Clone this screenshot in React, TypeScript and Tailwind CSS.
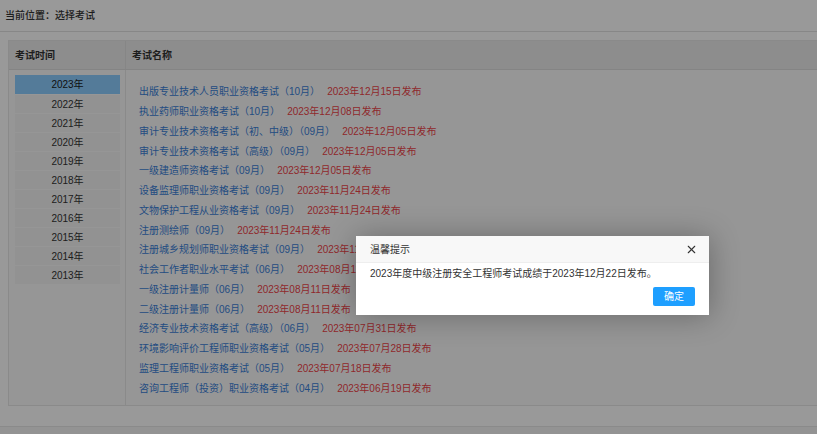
import { X } from 'lucide-react';

const years = ['2023年', '2022年', '2021年', '2020年', '2019年', '2018年', '2017年', '2016年', '2015年', '2014年', '2013年'];

const exams = [
  ['出版专业技术人员职业资格考试（10月）', '2023年12月15日发布'],
  ['执业药师职业资格考试（10月）', '2023年12月08日发布'],
  ['审计专业技术资格考试（初、中级）（09月）', '2023年12月05日发布'],
  ['审计专业技术资格考试（高级）（09月）', '2023年12月05日发布'],
  ['一级建造师资格考试（09月）', '2023年12月05日发布'],
  ['设备监理师职业资格考试（09月）', '2023年11月24日发布'],
  ['文物保护工程从业资格考试（09月）', '2023年11月24日发布'],
  ['注册测绘师（09月）', '2023年11月24日发布'],
  ['注册城乡规划师职业资格考试（09月）', '2023年11月24日发布'],
  ['社会工作者职业水平考试（06月）', '2023年08月11日发布'],
  ['一级注册计量师（06月）', '2023年08月11日发布'],
  ['二级注册计量师（06月）', '2023年08月11日发布'],
  ['经济专业技术资格考试（高级）（06月）', '2023年07月31日发布'],
  ['环境影响评价工程师职业资格考试（05月）', '2023年07月28日发布'],
  ['监理工程师职业资格考试（05月）', '2023年07月18日发布'],
  ['咨询工程师（投资）职业资格考试（04月）', '2023年06月19日发布'],
];

export default function App() {
  return (
    <div className="relative h-[434px] w-[817px] overflow-hidden bg-white font-['Liberation_Sans','Noto_Sans_CJK_SC',sans-serif] text-[10px] text-[#333]">
      {/* breadcrumb */}
      <div className="flex h-[32px] items-center border-b border-[#e2e2e2] px-[5px] font-medium">
        当前位置：选择考试
      </div>

      {/* main panel */}
      <div className="ml-[8px] mt-[8px] w-[840px] border border-[#e6e6e6] bg-[#fbfbfb]">
        <div className="flex h-[29px] border-b border-[#dcdcdc] bg-[#ececec] font-bold">
          <div className="flex w-[117px] items-center border-r border-[#e0e0e0] pl-[6px]">考试时间</div>
          <div className="flex items-center pl-[6px]">考试名称</div>
        </div>
        <div className="flex h-[335px]">
          <div className="w-[117px] border-r border-[#e6e6e6] px-[6px] pt-[5px]">
            <ul className="w-[105px] bg-[#f3f3f3]">
              {years.map((y, i) => (
                <li
                  key={y}
                  className={
                    i === 0
                      ? 'flex h-[19px] items-center justify-center bg-[#8ccdff] text-[#1a1a1a]'
                      : 'flex h-[19px] items-center justify-center border-t border-[#fafafa]'
                  }
                >
                  {y}
                </li>
              ))}
            </ul>
          </div>
          <ul className="pl-[13px] pt-[12px]">
            {exams.map(([name, date]) => (
              <li key={name} className="flex h-[19.75px] items-center whitespace-nowrap">
                <span className="mr-[7px] text-[#3a80d8]">{name}</span>
                <span className="text-[#ee4449]">{date}</span>
              </li>
            ))}
          </ul>
        </div>
      </div>

      <div className="mt-[20px] h-[10px] border-t border-[#e6e6e6] bg-[#f6f6f6]" />

      {/* shade */}
      <div className="absolute inset-0 bg-black/40" />

      {/* dialog */}
      <div className="absolute left-[356px] top-[236px] w-[353px] bg-white shadow-[1px_1px_30px_rgba(0,0,0,0.3)]">
        <div className="flex h-[27px] items-center justify-between border-b border-[#eee] bg-[#f8f8f8] pl-[14px] pr-[11px] text-[#333]">
          <span>温馨提示</span>
          <X size={13} strokeWidth={2} className="text-[#333]" />
        </div>
        <div className="px-[14px] pt-[3px] leading-[16px]">2023年度中级注册安全工程师考试成绩于2023年12月22日发布。</div>
        <div className="flex justify-end px-[14px] pb-[9px] pt-[5px]">
          <button className="h-[19px] w-[42px] rounded-[2px] bg-[#1e9fff] text-white">确定</button>
        </div>
      </div>
    </div>
  );
}
